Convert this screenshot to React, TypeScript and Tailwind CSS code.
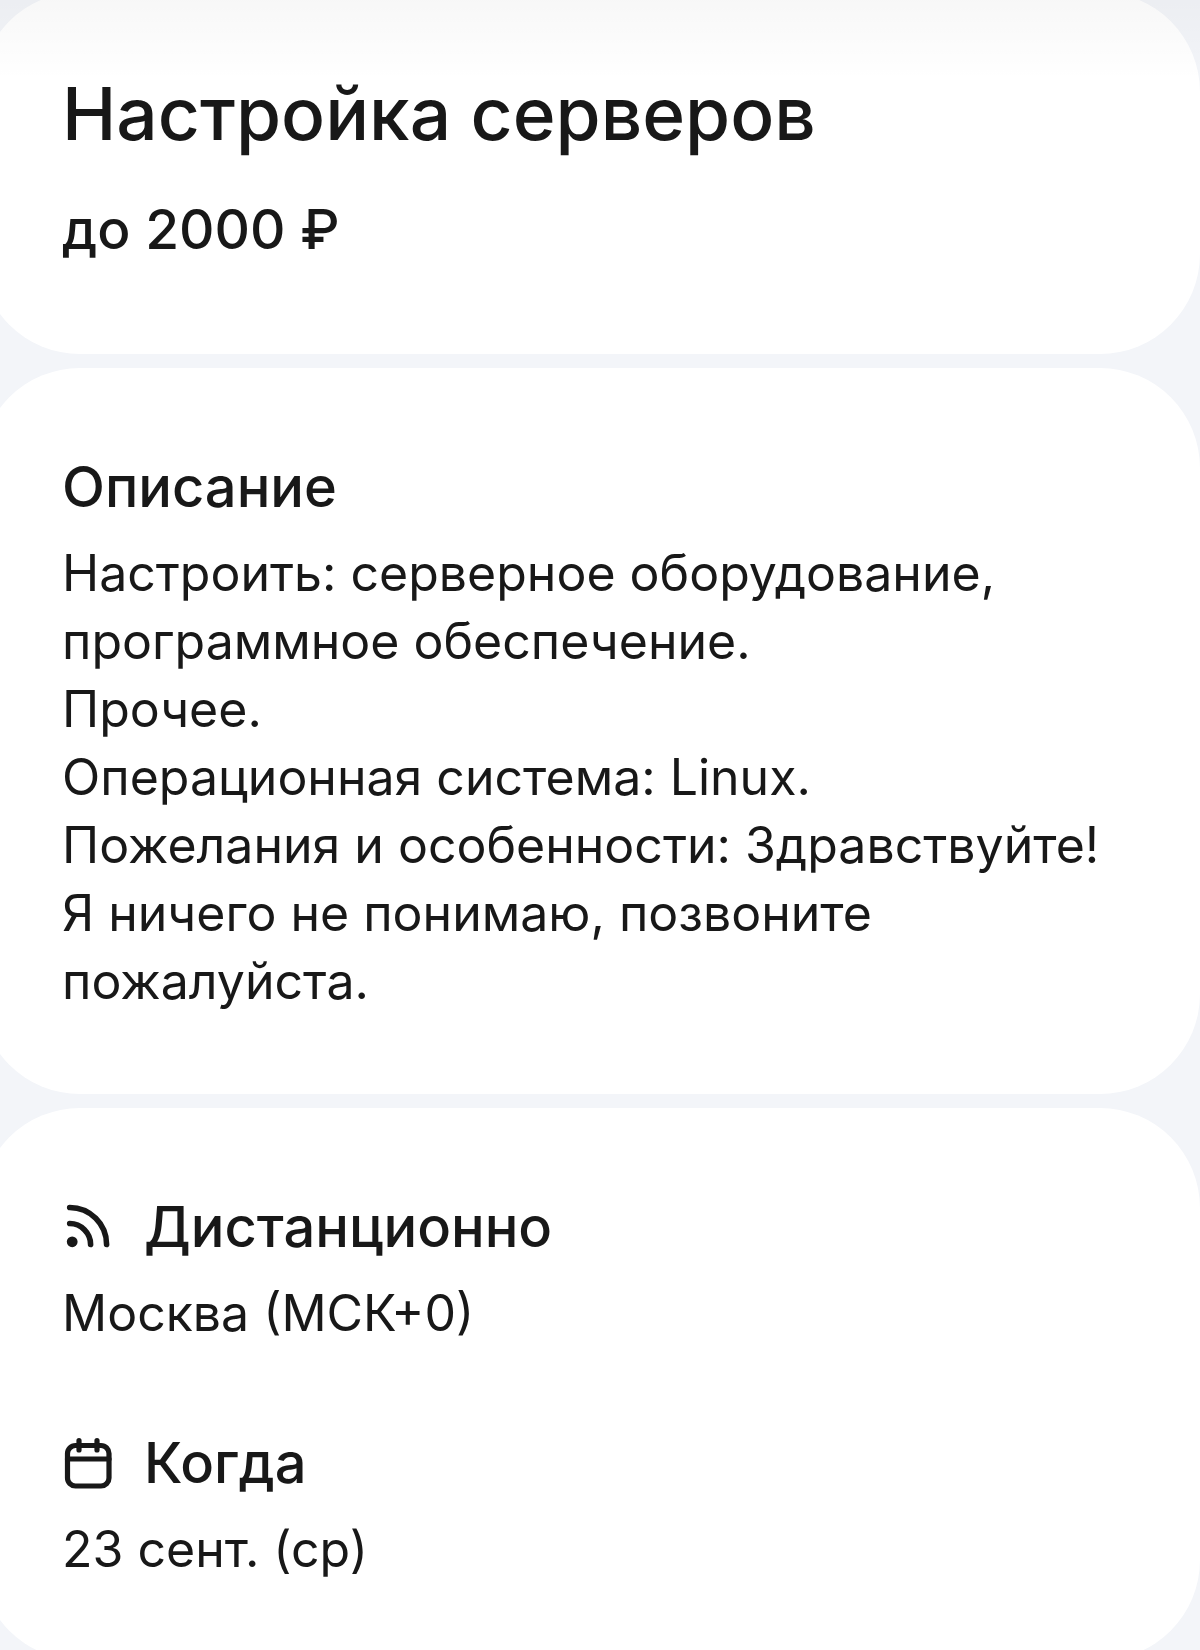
import type { ReactNode } from 'react'

const DESCRIPTION = [
  'Настроить: серверное оборудование, программное обеспечение.',
  'Прочее.',
  'Операционная система: Linux.',
  'Пожелания и особенности: Здравствуйте! Я ничего не понимаю, позвоните пожалуйста.',
]

function RemoteIcon() {
  return (
    <svg className="size-[50px] shrink-0 overflow-visible" viewBox="0 0 50 50" fill="none" stroke="currentColor" strokeWidth="5.6" strokeLinecap="round" aria-hidden="true">
      <path d="M7.7 5.5A37 37 0 0 1 44.6 42.4" />
      <path d="M7.7 21.5A21 21 0 0 1 28.6 42.4" />
      <circle cx="10.2" cy="39.8" r="5.4" fill="currentColor" stroke="none" />
    </svg>
  )
}

function CalendarIcon() {
  return (
    <svg className="size-[50px] shrink-0 overflow-visible" viewBox="0 0 50 50" fill="none" stroke="currentColor" strokeWidth="5.2" strokeLinecap="round" aria-hidden="true">
      <rect x="5.5" y="7.5" width="41.5" height="40.5" rx="8" />
      <path d="M5.5 21H47" />
      <path d="M17 2.5V12M35 2.5V12" />
    </svg>
  )
}

function Detail({ icon, title, children }: { icon: ReactNode; title: string; children: ReactNode }) {
  return (
    <div>
      <h2 className="flex items-center gap-8 text-[56px] leading-[72px] font-medium">
        {icon}
        {title}
      </h2>
      <p className="mt-4 text-[50px] leading-[68px]">{children}</p>
    </div>
  )
}

export default function App() {
  return (
    <div className="relative h-screen overflow-hidden bg-[#f3f5f9] font-['Inter','Noto_Sans',sans-serif] text-[#181818]">
      {/* Cards bleed past the top and left edges */}
      <main className="-mt-2 -ml-5 flex flex-col gap-3.5">
        <section className="rounded-[100px] bg-white pt-20 pr-16 pb-[89px] pl-[82px]">
          <h1 className="text-[73px] leading-[84px] font-medium">Настройка серверов</h1>
          <p className="mt-[37px] text-[55px] leading-[72px] font-medium">до 2000 ₽</p>
        </section>

        <section className="rounded-[100px] bg-white pt-[83px] pr-16 pb-[79px] pl-[82px]">
          <h2 className="text-[56px] leading-[72px] font-medium">Описание</h2>
          <div className="mt-4 text-[50px] leading-[68px]">
            {DESCRIPTION.map(line => (
              <p key={line}>{line}</p>
            ))}
          </div>
        </section>

        <section className="flex flex-col gap-20 rounded-[100px] bg-white pt-[83px] pr-16 pb-[77px] pl-[82px]">
          <Detail icon={<RemoteIcon />} title="Дистанционно">Москва (МСК+0)</Detail>
          <Detail icon={<CalendarIcon />} title="Когда">23 сент. (ср)</Detail>
        </section>
      </main>

      {/* Shadow of the header above */}
      <div className="pointer-events-none absolute inset-x-0 top-0 h-20 bg-linear-to-b from-black/3 to-transparent" />
    </div>
  )
}
